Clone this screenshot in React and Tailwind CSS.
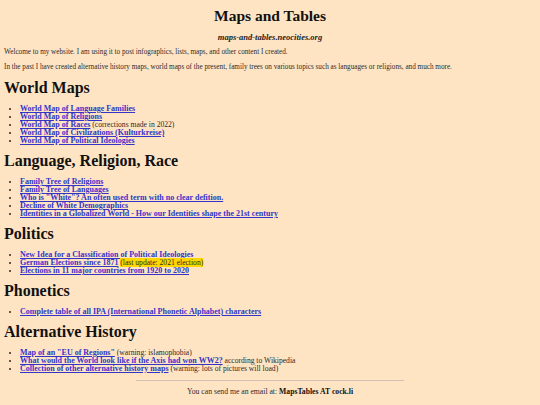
import React from "react";

const sections = [
  {
    title: "World Maps",
    items: [
      { link: "World Map of Language Families" },
      { link: "World Map of Religions" },
      { link: "World Map of Races", note: " (corrections made in 2022)" },
      { link: "World Map of Civilizations (Kulturkreise)" },
      { link: "World Map of Political Ideologies" },
    ],
  },
  {
    title: "Language, Religion, Race",
    items: [
      { link: "Family Tree of Religions" },
      { link: "Family Tree of Languages" },
      { link: 'Who is "White"? An often used term with no clear defition.' },
      { link: "Decline of White Demographics" },
      { link: "Identities in a Globalized World - How our Identities shape the 21st century" },
    ],
  },
  {
    title: "Politics",
    items: [
      { link: "New Idea for a Classification of Political Ideologies" },
      { link: "German Elections since 1871", note: "(last update: 2021 election)", mark: true },
      { link: "Elections in 11 major countries from 1920 to 2020" },
    ],
  },
  {
    title: "Phonetics",
    items: [{ link: "Complete table of all IPA (International Phonetic Alphabet) characters" }],
  },
  {
    title: "Alternative History",
    items: [
      { link: 'Map of an "EU of Regions"', note: " (warning: islamophobia)" },
      { link: "What would the World look like if the Axis had won WW2?", note: " according to Wikipedia" },
      { link: "Collection of other alternative history maps", note: " (warning: lots of pictures will load)" },
    ],
  },
];

const App = () => {
  return (
    <div
      className="w-[540px] h-[405px] overflow-hidden bg-[#ffe4c4] text-[#2a2a2a] px-[4px]"
      style={{ fontFamily: '"Liberation Serif", serif' }}
    >
      <h1 className="mt-[6px] h-[20px] leading-[20px] text-center text-[15.5px] font-bold text-[#111]">
        Maps and Tables
      </h1>
      <div className="mt-[6px] leading-[10px] text-center text-[8.5px] font-bold italic text-[#222]">
        maps-and-tables.neocities.org
      </div>
      <p className="mt-[5px] leading-[10px] text-[7.2px]">
        Welcome to my website. I am using it to post infographics, lists, maps, and other content I created.
      </p>
      <p className="mt-[5px] leading-[10px] text-[7.2px]">
        In the past I have created alternative history maps, world maps of the present, family trees on various
        topics such as languages or religions, and much more.
      </p>

      {sections.map((sec, idx) => (
        <div key={idx}>
          <h2 className="mt-[6px] mb-[7px] h-[20px] leading-[20px] text-[16px] font-bold text-[#111]">
            {sec.title}
          </h2>
          <ul className="list-disc pl-[16px] text-[7.6px]">
            {sec.items.map((it, i) => (
              <li key={i} className="leading-[8px]">
                <a className="font-bold text-[8px] text-[#3434c8] underline">{it.link}</a>
                {it.mark ? (
                  <>
                    {" "}
                    <span className="bg-[#ffd700]">{it.note}</span>
                  </>
                ) : (
                  it.note
                )}
              </li>
            ))}
          </ul>
        </div>
      ))}

      <hr className="mt-[7px] mx-auto w-[268px] border-t border-[#cfc2b4]" />
      <div className="mt-[6px] leading-[10px] text-center text-[7.7px]">
        You can send me an email at: <b className="text-[#111]">MapsTables AT cock.li</b>
      </div>
    </div>
  );
};

export default App;
